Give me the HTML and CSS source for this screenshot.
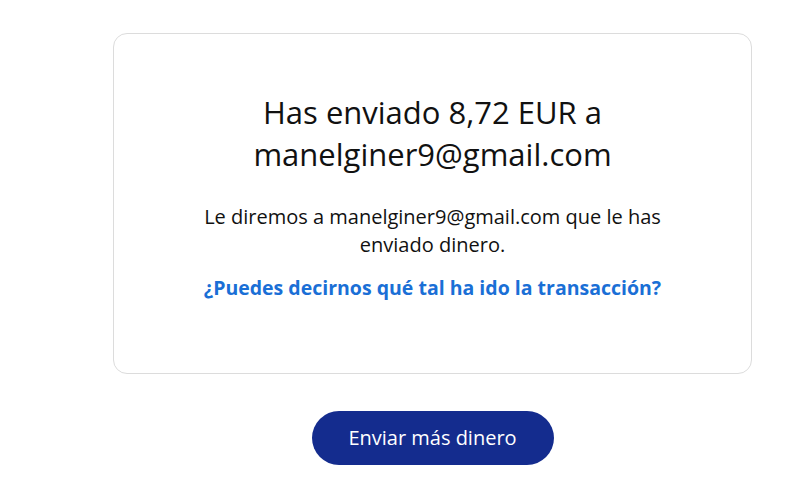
FILE: index.html
```html
<!DOCTYPE html>
<html lang="es">
<head>
    <meta charset="UTF-8">
    <meta name="viewport" content="width=device-width, initial-scale=1.0">
    <title>Pago enviado</title>
    <link rel="stylesheet" href="styles.css">
</head>
<body>

    <!-- Confirmation -->
    <div class="wrapper">
        <div class="card">
            <h1>Has enviado 8,72 EUR a manelginer9@gmail.com</h1>
            <p class="note">Le diremos a manelginer9@gmail.com que le has enviado dinero.</p>
            <a href="#" class="feedback">¿Puedes decirnos qué tal ha ido la transacción?</a>
        </div>

        <div class="actions">
            <a href="#" class="send-btn">Enviar más dinero</a>
        </div>
    </div>

</body>
</html>
```

FILE: styles.css
```css
/* General Styles */
body {
    font-family: "Open Sans", Lato, sans-serif;
    margin: 0;
    padding: 0;
    background-color: #fff;
    color: #111;
}

.wrapper {
    width: 639px;
    margin-left: 113px;
    padding-top: 33px;
}

/* Card */
.card {
    border: 1px solid #dcdcdc;
    border-radius: 14px;
    height: 341px;
    box-sizing: border-box;
    padding: 57px 40px 0;
    text-align: center;
}

.card h1 {
    font-size: 31px;
    font-weight: 400;
    line-height: 42px;
    margin: 0 auto 28px;
    width: 400px;
}

.note {
    font-size: 20px;
    line-height: 28px;
    margin: 0 auto 15px;
    width: 500px;
}

.feedback {
    display: block;
    color: #1a6fd6;
    font-size: 19.5px;
    font-weight: 700;
    line-height: 28px;
    text-decoration: none;
}

/* Button */
.actions {
    text-align: center;
    padding-top: 37px;
}

.send-btn {
    display: inline-block;
    width: 242px;
    height: 54px;
    line-height: 54px;
    border-radius: 27px;
    background-color: #142c8e;
    color: white;
    font-size: 20px;
    text-decoration: none;
}
```
